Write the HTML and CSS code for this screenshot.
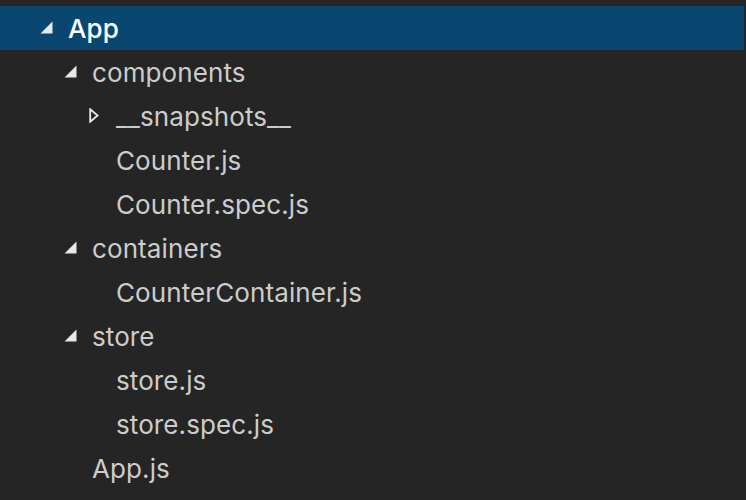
FILE: index.html
```html
<!DOCTYPE html>
<html>
<head>
<meta charset="utf-8">
<link rel="stylesheet" href="styles.css">
</head>
<body>
<div class="tree">
  <div class="row selected d0"><span class="twistie"><svg class="exp" width="13" height="13" viewBox="0 0 13 13"><path d="M12.5 0.5 L12.5 12.5 L0.5 12.5 Z" fill="#e8e8e8"/></svg></span><span class="label">App</span></div>
  <div class="row d1"><span class="twistie"><svg class="exp" width="13" height="13" viewBox="0 0 13 13"><path d="M12.5 0.5 L12.5 12.5 L0.5 12.5 Z" fill="#e8e8e8"/></svg></span><span class="label">components</span></div>
  <div class="row d2"><span class="twistie"><svg class="col" width="10" height="15" viewBox="0 0 10 15"><path d="M1.2 1.2 L8.6 7.5 L1.2 13.8 Z" fill="none" stroke="#e8e8e8" stroke-width="1.8" stroke-linejoin="miter"/></svg></span><span class="label">__snapshots__</span></div>
  <div class="row d2"><span class="twistie"></span><span class="label">Counter.js</span></div>
  <div class="row d2"><span class="twistie"></span><span class="label">Counter.spec.js</span></div>
  <div class="row d1"><span class="twistie"><svg class="exp" width="13" height="13" viewBox="0 0 13 13"><path d="M12.5 0.5 L12.5 12.5 L0.5 12.5 Z" fill="#e8e8e8"/></svg></span><span class="label">containers</span></div>
  <div class="row d2"><span class="twistie"></span><span class="label">CounterContainer.js</span></div>
  <div class="row d1"><span class="twistie"><svg class="exp" width="13" height="13" viewBox="0 0 13 13"><path d="M12.5 0.5 L12.5 12.5 L0.5 12.5 Z" fill="#e8e8e8"/></svg></span><span class="label">store</span></div>
  <div class="row d2"><span class="twistie"></span><span class="label">store.js</span></div>
  <div class="row d2"><span class="twistie"></span><span class="label">store.spec.js</span></div>
  <div class="row d1"><span class="twistie"></span><span class="label">App.js</span></div>
</div>
</body>
</html>
```
FILE: styles.css
```css
html, body {
  margin: 0;
  padding: 0;
  background: #252526;
  height: 100%;
  overflow: hidden;
}
.tree {
  padding-top: 6px;
  margin-right: 2px;
  font-family: Inter, "Noto Sans", sans-serif;
  font-size: 26px;
  color: #cccccc;
}
.row {
  height: 44px;
  display: flex;
  align-items: center;
  white-space: nowrap;
}
.row.selected {
  background: #094771;
  color: #ffffff;
}
.selected .label { font-weight: 500; }
.d0 { padding-left: 40px; }
.d1 { padding-left: 64px; }
.d2 { padding-left: 88px; }
.twistie {
  width: 28px;
  height: 44px;
  flex: none;
  display: flex;
  align-items: center;
}
.twistie .exp { margin-top: -2px; }
.twistie .col { margin-left: 1px; margin-top: -1px; }
.label {
  line-height: 44px;
  letter-spacing: 0.1px;
  padding-top: 1px;
}
```
